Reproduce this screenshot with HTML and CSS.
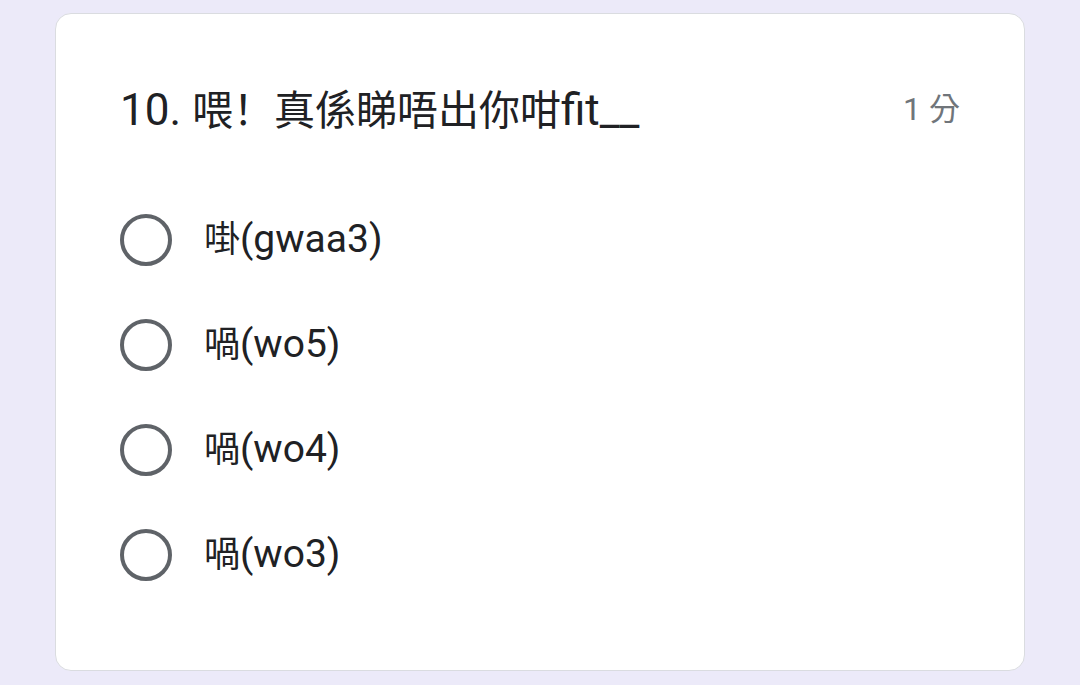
FILE: index.html
```html
<!DOCTYPE html>
<html lang="zh-Hant">
<head>
<meta charset="utf-8">
<link rel="stylesheet" href="styles.css">
</head>
<body>
<div class="card">
  <div class="title-row">
    <div class="title">10. <span class="cjk">喂<span class="punct" lang="zh-Hans">！</span>真係睇唔出你咁</span>fit__</div>
    <div class="points">1 <span class="cjk">分</span></div>
  </div>
  <div class="options">
    <div class="option"><span class="radio"></span><span class="label"><span class="cjk">啩</span>(gwaa3)</span></div>
    <div class="option"><span class="radio"></span><span class="label"><span class="cjk">喎</span>(wo5)</span></div>
    <div class="option"><span class="radio"></span><span class="label"><span class="cjk">喎</span>(wo4)</span></div>
    <div class="option"><span class="radio"></span><span class="label"><span class="cjk">喎</span>(wo3)</span></div>
  </div>
</div>
</body>
</html>
```

FILE: styles.css
```css
html, body {
  margin: 0;
  padding: 0;
}
body {
  background: #eceaf9;
  font-family: Roboto, "Noto Sans CJK TC", sans-serif;
  color: #202124;
  padding-top: 13px;
}
.card {
  margin: 0 55px;
  height: 656px;
  box-sizing: content-box;
  background: #fff;
  border: 1px solid #dadce0;
  border-radius: 16px;
  padding: 0 64px;
}
.title-row {
  display: flex;
  justify-content: space-between;
  align-items: center;
  padding-top: 71px;
  height: 48px;
}
.title {
  font-size: 44px;
  line-height: 48px;
}
.title .cjk {
  font-size: 41px;
}
.punct {
  font-family: "Noto Sans CJK SC", sans-serif;
}
.points {
  font-size: 32px;
  line-height: 48px;
  color: #70757a;
}
.points .cjk {
  font-size: 31px;
}
.options {
  margin-top: 54px;
  display: flex;
  flex-direction: column;
}
.option {
  display: flex;
  align-items: center;
  height: 105px;
}
.radio {
  width: 44px;
  height: 44px;
  border: 4px solid #5f6368;
  border-radius: 50%;
  flex: none;
}
.label {
  margin-left: 32px;
  font-size: 39px;
  line-height: 44px;
}
.label .cjk {
  font-size: 36px;
}
```
